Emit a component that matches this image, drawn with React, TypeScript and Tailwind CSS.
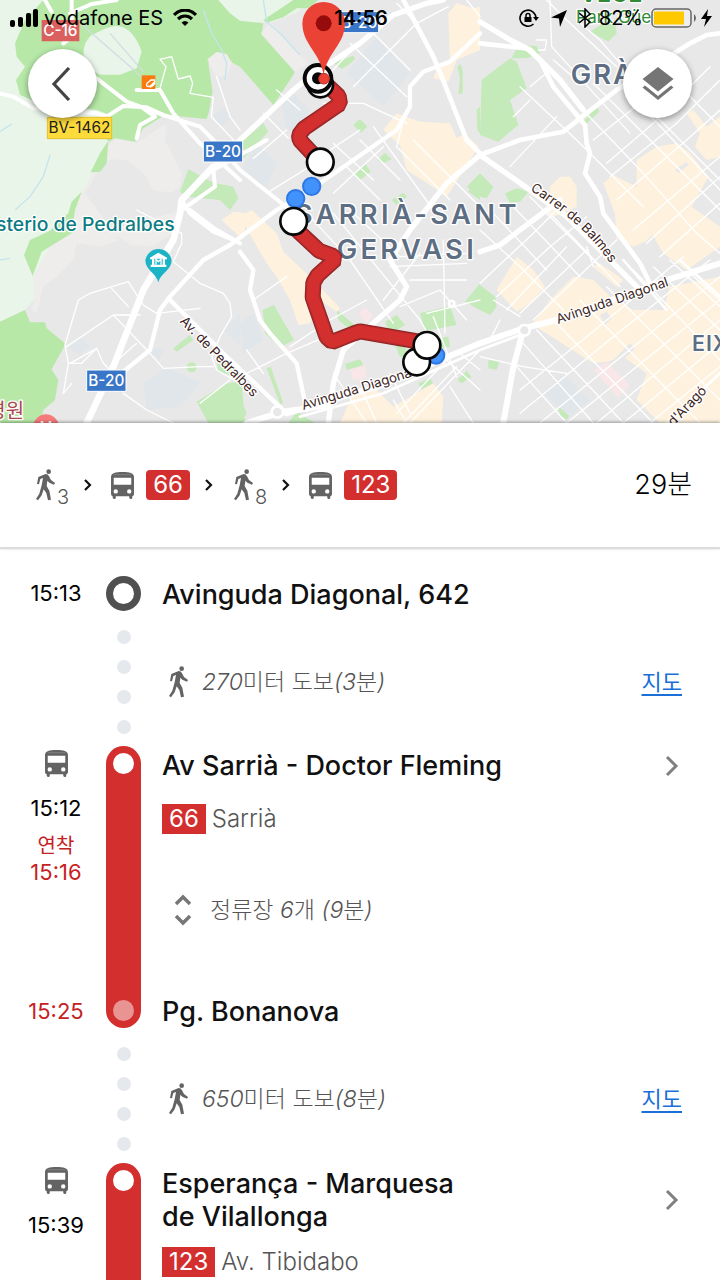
import type { ReactNode } from "react";

const sans = "font-['Inter','Noto_Sans_CJK_KR',sans-serif]";

function Road({ d, w = 7 }: { d: string; w?: number }) {
  return <path d={d} fill="none" stroke="#fff" strokeWidth={w} strokeLinejoin="round" strokeLinecap="round" />;
}

/* The map is drawn in a 3x coordinate space. */
function RouteMap() {
  return (
    <svg viewBox="0 0 2160 1269" preserveAspectRatio="xMidYMid slice" className={`block h-full w-full ${sans}`} role="img" aria-label="Map">
      <rect width="2160" height="1269" fill="#e8e8e8" />
      {/* hills and beige land */}
      <path fill="#eaf5ea" d="M0 0H940L885 40 820 66 720 70 640 100 600 250 330 420 300 470 265 545 215 630 100 830 105 895 75 930 0 965Z" />
      <path fill="#efedeb" d="M345 415 410 428 500 370 495 420 520 470 545 520 540 560 515 578 460 570 430 520 380 480 330 478 290 520 255 580 360 720 300 740 230 730 220 780 170 830 130 860 110 940 95 930 105 895 100 830 215 630 265 545 300 470Z" />
      <path fill="#efedeb" d="M330 690 545 630 530 690 460 740 390 735Z" />
      {/* forest */}
      <path fill="#b7e8a8" d="M130 0 75 60 45 130 50 170 75 200 48 240 60 285 120 310 290 330 330 345 310 395 325 425 345 415 405 425 430 385 495 345 620 357 640 290 625 190 650 160 700 190 720 200 820 315 870 240 885 215 785 105 790 70 720 62 690 40 655 0Z" />
      <path fill="#b7e8a8" d="M800 68 850 52 890 25 925 25 955 0H880L790 60Z" />
      <path fill="#eaf5ea" d="M320 84C375 65 405 100 425 155L410 205 360 224 300 224C245 200 235 140 275 105Z" />
      <path fill="#efedeb" d="M622 178 650 156 680 162 696 188 680 230 655 240 640 215Z" />
      <path fill="#e8e8e8" d="M650 230 680 230 720 290V420L625 355 634 292Z" />
      <path fill="#efedeb" d="M783 98 812 66 925 190 885 216Z" />
      <path fill="#b7e8a8" d="M325 422 320 490 300 515 272 517 300 460ZM245 575 215 605 205 640 150 692 90 720 72 765 98 828 125 755 215 700 225 630Z" />
      <path fill="#b7e8a8" d="M0 965 75 930 90 967 135 967 140 985 197 1032 155 1108 175 1140 165 1200 130 1230 120 1269H0Z" />
      {/* parks */}
      <path fill="#c3eab8" d="M565 508 640 548 700 560 715 595 690 630 660 600 560 590 540 575ZM590 1205 680 1150 725 1145 735 1269H625ZM520 1045 570 1005 580 1020 530 1055ZM560 1102a15 15 0 1 0 30 0a15 15 0 1 0-30 0M650 1080 690 1085 715 1110 690 1125 655 1115Z" />
      <path fill="#c3eab8" d="M1000 190 1030 178 1060 167 1065 178 1045 195 1025 207ZM1372 200 1382 192 1388 215 1388 280 1375 282 1380 235ZM1060 375 1080 357 1102 380 1082 398ZM1062 525 1095 490 1112 515 1080 540ZM1132 480 1155 458 1175 478 1150 490ZM1175 600 1210 578 1220 590 1190 615ZM720 430 790 370 805 395 730 475Z" />
      <path fill="#c3eab8" d="M1445 240 1530 175 1550 185 1580 265 1530 300 1555 375 1495 425 1440 405ZM1535 175 1555 135 1610 138 1620 160 1580 175ZM1810 70 1845 65 1850 100 1825 125 1770 95ZM1750 365 1790 318 1798 335 1755 375ZM1400 560 1440 520 1480 560 1460 595 1440 590ZM1515 580 1550 565 1585 575 1560 605 1530 610ZM1440 855 1485 890 1490 920 1470 945 1440 930ZM1840 675 1880 720 1875 725 1840 685ZM2025 760 2075 810 2070 815 2025 770ZM1465 1080 1498 1085 1490 1110 1465 1105ZM1675 1225 1690 1220 1715 1240 1700 1258 1680 1248Z" />
      <path fill="#c3eab8" d="M788 930 822 915 882 1020 840 1042 795 1000ZM800 1105 812 1100 850 1210 840 1212ZM1010 930 1070 980 1060 995 1015 960ZM1155 965 1190 945 1215 975 1190 990 1230 1075 1200 1070 1170 1000ZM1260 940 1350 918 1370 975 1275 993ZM1395 905 1440 850V930ZM1310 1015 1345 1010 1350 1040 1320 1045ZM1255 1150 1290 1135 1300 1150 1265 1168ZM1372 1140 1400 1112 1415 1130 1385 1150ZM1035 1092 1080 1078 1090 1095 1040 1110ZM865 1269 890 1235 945 1269ZM720 1190 740 1240 720 1269ZM1430 330 1440 320V400L1432 390ZM1405 575 1440 520V600Z" />
      {/* institutions */}
      <path fill="#e1e6ea" d="M840 290 880 280 930 330 900 385 860 390ZM1040 220 1130 110 1230 220 1150 320ZM730 500 770 430 830 490 800 560 750 540ZM720 970 760 940 790 1020 730 1060ZM1630 1180 1690 1120 1770 1200 1710 1250ZM640 345 670 325 700 355 660 380ZM430 1150 500 1100 600 1150 540 1220 440 1230ZM670 990 720 940V1040ZM200 1040 240 1010 270 1040 240 1065ZM460 1040 490 1050 480 1080 450 1060Z" />
      <path fill="#f8e6e8" d="M1075 940 1095 920 1118 945 1100 970ZM1050 1110 1095 1095 1100 1135 1060 1140ZM850 1050 865 1040 878 1060 860 1072ZM1780 1110 1820 1085 1890 1155 1855 1193Z" />
      {/* commercial areas */}
      <path fill="#fef2df" d="M1345 40 1370 10 1420 25 1440 20V150L1370 180 1345 245 1300 235 1310 205 1350 185ZM1150 390 1190 340 1260 365 1350 370 1370 415 1395 400 1435 440 1340 590 1290 555 1220 510 1200 435ZM720 650 755 630 830 700 850 755 940 840 1020 925 1010 935 960 900 930 970 895 975 870 900 830 830 800 790ZM665 660 700 635 740 640 730 720Z" />
      <path fill="#fef2df" d="M2060 340 2080 330 2120 380 2160 350V470L2120 480 2085 440 2100 400ZM1910 480 1970 440 2030 430 2070 460 2125 530 2075 620 2160 680V740L2060 810 1990 760 1960 715 1900 740 1850 715 1845 640 1810 550 1840 525 1910 560ZM1650 560 1680 530 1710 530 1730 560 1730 620 1650 655ZM1490 870 1550 770 1600 810 1635 860 1590 910 1550 935ZM1600 970 1650 900 1720 830 1780 840 1840 900 1900 930 1990 930 2010 860 2060 850 2160 830V1269H1980L1910 1200 1940 1120 1870 1070 1820 1085 1780 1090 1600 975ZM1020 1269 1060 1180 1130 1170 1180 1220 1300 1150 1330 1190 1325 1269ZM1780 800 1800 790 1870 840 1850 860Z" />
      <path fill="#e8e8e8" d="M1940 720 1960 705 1990 765 1960 790ZM1800 945 1820 935 1835 955 1815 975ZM1875 1045 1890 1030 1905 1045 1870 1080 1840 1100 1840 1080ZM2025 510 2060 485 2065 495 2035 520Z" />

      {/* streams and cable line */}
      <path d="M0 395 35 372M150 465 130 530 90 590 45 630M0 780 30 775M610 30 635 100 665 150 680 190 675 240M790 0 800 65 840 100 900 165" fill="none" stroke="#c4e4ee" strokeWidth="4" />
      <path d="M230 60 425 230M330 100 430 215" fill="none" stroke="#d3dce0" strokeWidth="4" />

      {/* minor streets */}
      <Road w={4} d="M480 178 515 170 535 237 570 228 578 250 570 280 640 292 634 350 720 440M480 178 498 200 480 265M650 230 690 350 720 390M410 630 545 700 545 730 520 785 600 850 670 880 690 910 695 950 660 1010 635 1070 650 1110 720 1150M195 1035 235 900 270 880 385 845 410 885 430 915 470 940 600 925M200 1040 340 945 420 945M340 945 450 1060 490 1105 600 1100 640 1100M210 1090 290 1045 310 1090 350 1130M195 1035 205 1090 190 1180 215 1150M205 1090 245 1090 285 1050M330 860 385 920M370 1180 440 1230 520 1269M600 1210 690 1140M410 1030 330 1100" />
      <Road w={4} d="M760 475 860 390M790 340 865 415M830 270 900 330M1050 130 1220 290M1110 90 1230 210M1075 130 970 240M1130 190 1060 260M1130 190 1250 70 1345 20M970 310 1090 310 1220 370M1000 430 1120 540M960 470 1080 390M1040 500 1140 600M1080 420 1200 540M1120 380 1300 630M1150 440 1000 580M800 580 960 480M1210 360 1190 440 1350 600M1240 420 1440 620M1190 10 1240 60M1400 0 1440 50M860 680 1000 820M930 650 1050 780 1180 970M1000 640 1260 960 1340 1100M1050 630 1200 770 1400 760M1170 800 1400 790M1230 840 1400 840M1260 760 1150 900M1330 720 1335 1000M1280 940 1440 900M1200 920 1320 870 1400 960M760 900 860 830M720 1130 860 1060 1000 1000M740 1050 790 1120M870 1040 990 960 1100 900" />
      <Road w={4} d="M1090 1180 1130 1269M1000 1120 1100 1269M1180 1200 1220 1269M1190 1240 1340 1080M1210 1269 1370 1100M1230 1269 1440 1050M1340 1080 1440 1170M1380 1060 1440 1110M1350 1160 1420 1269M1300 950 1370 1130M1170 1120 1230 1240M1640 0 1700 60 1850 200M1650 0 1655 140 1890 400M1610 120 1640 120 1635 150 1615 150M1730 60 1800 120 1860 190M1560 260 1740 430 1930 620M1590 300 1540 350M1530 500 1670 350M1590 260 1650 210M1660 180 1730 240M1720 300 1930 520 2090 700 2160 760M1780 250 2060 530M1850 240 2160 570M1900 370 2160 630M1950 330 2160 540M2060 280 2160 380M1780 420 1920 310 2000 250M1820 490 1960 370 2130 200M1830 530 2030 370 2160 240M1850 600 2060 420 2160 330M1900 690 2160 470M1940 730 2160 530M1980 770 2160 610" />
      <Road w={4} d="M1440 690 1560 800 1690 930M1480 640 1640 810M1540 620 1740 830M1590 590 1800 800M1640 630 1860 860M1440 850 1600 700 1680 620M1490 890 1650 740 1760 650M1520 930 1700 740M1560 940 1760 750M1600 960 1850 720M1760 740 1780 800M1660 960 1960 1269M1610 990 1870 1269M1570 1030 1780 1269M1550 1100 1700 1269M1740 900 2100 1269M1820 860 2160 1200M1900 810 2160 1080M1960 800 2160 990M2010 780 2160 920M2070 820 2160 900M1560 1170 1760 1010 2050 770M1560 1240 1840 1010 2130 780M1620 1269 1900 1040 2160 830M1700 1269 1960 1060 2160 900M1790 1269 2160 960M1870 1269 2160 1030M1950 1269 2160 1100M1480 900 1560 950M1475 1010 1500 960M1440 1070 1570 1100 1700 1120" />

      {/* main roads */}
      <Road w={12} d="M0 280 40 290 100 325 290 340 320 350M320 350 370 318 440 322 490 345M410 415 420 375 465 350 430 325" />
      <Road w={12} d="M290 235 380 305 490 345 600 380 640 420 720 510 870 630M410 270 480 270 520 340 600 430 720 540M135 0 155 35M215 0 215 110 190 130M210 40 275 12 350 0M545 630 645 560 640 510 800 420M570 630 650 690 720 730M545 600 570 640 640 695 700 720" />
      <Road w={20} d="M640 500 545 600 540 640 520 720 430 870 340 1100 260 1269" />
      <Road w={16} d="M640 505 720 420 880 270 930 230 1080 130 1180 45 1280 10 1330 0" />
      <Road w={13} d="M370 1115 450 1050 480 930 510 890 610 780 690 735 830 630 930 570 1060 480 1190 390 1230 320 1230 260 1270 215 1350 185 1440 100M510 900 550 940 680 1070 860 1240M720 755 760 810 750 870 780 960 810 1000 890 1090 920 1230" />
      <Road w={14} d="M1210 0 1300 170 1325 230 1400 420 1440 460M1440 465 1560 420 1690 395 1740 355 1850 270 2070 130 2120 105 2160 100M1440 130 1580 145 1620 180 1660 260 1755 375 1760 430 1770 460 1755 520 1800 590 1810 640 1920 790 1960 870" />
      <Road w={16} d="M1440 65 1530 120 1590 150 1680 240 1750 330M985 1269 1000 1150 1030 1050 1120 970 1200 900 1220 860 1170 780 1230 690 1340 550 1440 465M1440 465 1590 570 1700 650 1840 790 1920 870M1440 755 1500 735 1680 600" />
      <Road w={18} d="M860 1240 1130 1160 1440 1030 1570 985 1670 960 2000 840 2160 790M740 1269 850 1235 990 1215M1570 990 1540 1100 1510 1269" />
      <Road w={8} d="M900 1250 1150 1180 1440 1050 1560 1005M2000 1269 2160 1120M1870 780 2000 930M2040 780 2160 890" />
      <g fill="#e8e8e8" stroke="#fff" strokeWidth="8">
        <circle cx="1573" cy="991" r="16" /><circle cx="832" cy="1236" r="17" /><circle cx="1355" cy="911" r="8" />
      </g>

      {/* road shields */}
      <g fontSize="46" fontWeight="500" textAnchor="middle">
        <path fill="#d9605f" d="M125 60H238V124H125Z" /><text x="181" y="108" fill="#fff">C-16</text>
        <path fill="#fddb3a" stroke="#e5bf2d" strokeWidth="3" d="M142 352H335V416H142Z" /><text x="238" y="400" fill="#222" fontWeight="400">BV-1462</text>
        <g fill="#3a76c8" stroke="#fff" strokeWidth="3"><path d="M610 423H728V486H610ZM260 1110H378V1174H260ZM1020 35H1136V98H1020Z" /></g>
        <g fill="#fff"><text x="669" y="471">B-20</text><text x="319" y="1159">B-20</text><text x="1078" y="84">B-20</text></g>
      </g>
      <path fill="#fa7a10" d="M425 226H466V267H425Z" />
      <path d="M465 240H453L441 250C436 262 448 262 455 254L466 243M449 261C461 260 462 252 466 249" fill="none" stroke="#fff" strokeWidth="4" />

      {/* street and area names */}
      <g paintOrder="stroke" stroke="#fff" strokeWidth="8" strokeLinejoin="round">
        <g fill="#3d2522" fontSize="40">
          <path id="balmes" d="M1590 570C1680 630 1765 690 1830 790" fill="none" stroke="none" />
          <text><textPath href="#balmes">Carrer de Balmes</textPath></text>
          <text transform="translate(1674 972) rotate(-19)">Avinguda Diagonal</text>
          <text transform="translate(910 1230) rotate(-17)">Avinguda Diagonal</text>
          <text transform="translate(538 965) rotate(46)">Av. de Pedralbes</text>
          <text transform="translate(2020 1280) rotate(-46)">d'Aragó</text>
        </g>
        <text x="-12" y="694" fontSize="58" fontWeight="500" fill="#0d7c83">sterio de Pedralbes</text>
        <text x="-38" y="1255" fontSize="60" fill="#a9464e">병원</text>
        <g fill="#5d6e83" fontSize="82" fontWeight="600" letterSpacing="10">
          <text x="884" y="671">SARRIÀ-SANT</text><text x="1010" y="777">GERVASI</text><text x="1712" y="252" letterSpacing="6">GRÀCIA</text>
          <text x="2076" y="1053" fontSize="64" letterSpacing="3">EIXAMPLE</text>
        </g>
        <g fill="#318a35"><text x="1728" y="68" fontSize="52">Park Güell</text><text x="1740" y="5" fontSize="70" fontWeight="600">VECE</text></g>
      </g>

      {/* museum and hospital pins */}
      <path fill="#1bb4c7" d="M475 847C468 819 436 810 436 781A40 40 0 0 1 515 781C515 810 482 819 475 847Z" />
      <path fill="#fff" fillRule="evenodd" d="M475 758 450 773V778H456V794H452V801H499V794H495V778H501V773ZM463 776H488V794H463Z" />
      <path d="M468 794V777L475 785 483 777V794" fill="none" stroke="#fff" strokeWidth="4" />
      <circle cx="138" cy="1282" r="39" fill="#f57b7c" /><path d="M126 1263V1280M150 1263V1280" stroke="#fff" strokeWidth="8" />

      {/* itinerary */}
      <g fill="#4292fb" stroke="#2d78e5" strokeWidth="6">
        <circle cx="960" cy="500" r="22" /><circle cx="935" cy="559" r="26" /><circle cx="887" cy="596" r="26" /><circle cx="1308" cy="1066" r="25" />
      </g>
      <g fill="none" strokeLinejoin="bevel">
        <path d="M965 240 1016 288 1020 312 1010 318 912 385 897 405 899 420 955 480M880 680 957 752 1000 768 1006 778 952 827 940 848 938 892 980 1012 996 1026 1060 1001 1080 994 1270 1027" stroke="#8f2424" strokeWidth="48" />
        <path d="M965 240 1016 288 1020 312 1010 318 912 385 897 405 899 420 955 480M880 680 957 752 1000 768 1006 778 952 827 940 848 938 892 980 1012 996 1026 1060 1001 1080 994 1270 1027" stroke="#b52b2b" strokeWidth="42" />
        <path d="M965 240 1016 288 1020 312 1010 318 912 385 897 405 899 420 955 480M880 680 957 752 1000 768 1006 778 952 827 940 848 938 892 980 1012 996 1026 1060 1001 1080 994 1270 1027" stroke="#d32f2f" strokeWidth="35" />
      </g>
      <g fill="#fff" stroke="#080808" strokeWidth="8">
        <circle cx="961" cy="254" r="38" /><circle cx="954" cy="235" r="40" strokeWidth="12" />
        <circle cx="961" cy="486" r="40" /><circle cx="881" cy="664" r="40" /><circle cx="1250" cy="1086" r="40" /><circle cx="1281" cy="1036" r="40" />
      </g>
      <circle cx="954" cy="235" r="18" fill="#080808" />
      <path fill="#ea4335" d="M971 225C962 160 907 133 907 70A64 64 0 0 1 1035 70C1035 133 980 160 971 225Z" />
      <circle cx="971" cy="70" r="24" fill="#960b0b" /><circle cx="972" cy="236" r="16" fill="#ea4335" stroke="#bd3028" strokeWidth="3" />
    </svg>
  );
}

function StatusBar() {
  return (
    <div className="absolute inset-x-0 top-0 grid h-9 grid-cols-[1fr_auto_1fr] items-center pr-2 pl-2.5 text-xl text-black">
      <div className="flex items-center gap-1.5">
        <svg viewBox="0 0 28 18" className="h-[18px] w-7"><rect y="11" width="5" height="7" rx="2" /><rect x="8" y="8" width="5" height="10" rx="2" /><rect x="16" y="4" width="5" height="14" rx="2" /><rect x="23" width="5" height="18" rx="2" /></svg>
        <span>vodafone ES</span>
        <svg viewBox="0 0 24 18" className="ml-1 h-[18px] w-6"><path d="M1 6C7-.5 17-.5 23 6M5 10C9 6 15 6 19 10" fill="none" stroke="#000" strokeWidth="3.2" /><path d="M8.5 13.5Q12 10.5 15.5 13.5L12 17Z" /></svg>
      </div>
      <span className="font-semibold">14:56</span>
      <div className="flex items-center justify-end gap-2">
        <svg viewBox="0 0 20 18" className="h-[18px] w-5"><path d="M14.5 15A8 8 0 1 1 17 9" fill="none" stroke="#000" strokeWidth="1.6" /><path d="M14 8H20L17 12ZM5.5 8H12.5V13H5.5Z" /><path d="M7 8V6.5A2 2 0 0 1 11 6.5V8" fill="none" stroke="#000" strokeWidth="1.5" /></svg>
        <svg viewBox="0 0 16 17" className="ml-1 h-[17px] w-4"><path d="M16 0 9 17 8 8.5 0 7.5Z" /></svg>
        <svg viewBox="0 0 12 20" className="ml-1 h-5 w-3"><path d="M0 5 11 14 6 19V1L11 6 0 15" fill="none" stroke="#000" strokeWidth="1.5" /></svg>
        <span>82%</span>
        <svg viewBox="0 0 46 20" className="h-5 w-[46px]"><rect x="1" y="1" width="39" height="18" rx="4" fill="#eee" stroke="#666" strokeWidth="1.5" /><rect x="3" y="3.5" width="30" height="13" fill="#ffc900" /><path d="M43 6Q47 10 43 14Z" fill="#666" /></svg>
        <svg viewBox="0 0 11 18" className="-ml-1 h-[18px] w-[11px]"><path d="M7 0 0 10H5L3 18 11 7H6Z" /></svg>
      </div>
    </div>
  );
}

const roundButton = "grid size-[69px] place-items-center rounded-full bg-white shadow-[0_2px_6px_rgba(0,0,0,0.4)]";

function WalkIcon() {
  return (
    <svg viewBox="0 0 57 96" className="h-8 w-[19px] shrink-0" fill="#636363" aria-hidden="true">
      <circle cx="38" cy="8" r="7" />
      <path d="M3 45 7 24 29 15Q36 15 39 22L45 33 57 42 54 47 40 41 34 35 32 51 40 65 45 92 36 94 31 72 23 61 17 79 6 94 0 90 10 74 17 49 21 27 13 30 9 46Z" />
    </svg>
  );
}

function BusIcon() {
  return (
    <svg viewBox="0 0 68 80" className="h-[27px] w-[23px] shrink-0" fill="#636363" aria-hidden="true">
      <path fillRule="evenodd" d="M0 15C0 3 13 0 34 0S68 3 68 15V66Q68 71 63 72V76Q63 80 59 80T54 76V72H14V76Q14 80 10 80T5 76V72Q0 71 0 66ZM8 17V38H60V17ZM14 51A6.500 6.500 0 1 0 14 64A6.500 6.500 0 1 0 14 51ZM54 51A6.500 6.500 0 1 0 54 64A6.500 6.500 0 1 0 54 51Z" />
      <path d="M8 8H60" stroke="#8d8d8d" strokeWidth="2" />
    </svg>
  );
}

function Chevron() {
  return <svg viewBox="0 0 14 22" className="mr-[3px] h-[22px] w-3.5" aria-hidden="true"><path d="M2 2 11 11 2 20" fill="none" stroke="#808080" strokeWidth="3" /></svg>;
}

function Sep() {
  return <svg viewBox="0 0 8 12" className="h-3 w-2" aria-hidden="true"><path d="M1 1 6 6 1 11" fill="none" stroke="#111" strokeWidth="2.2" /></svg>;
}

function SummaryWalk({ minutes }: { minutes: string }) {
  return (
    <span className="flex items-center gap-0.5 pl-1.5">
      <WalkIcon />
      <span className="pt-6 text-xl leading-6 font-light text-[#555]">{minutes}</span>
    </span>
  );
}

function SummaryBus({ line }: { line: string }) {
  return (
    <span className="flex items-center gap-3 pl-1">
      <BusIcon />
      <span className="rounded bg-[#d32f2f] px-[7px] text-2xl leading-[30px] text-white">{line}</span>
    </span>
  );
}

function Row({ time, rail, children }: { time?: ReactNode; rail: ReactNode; children: ReactNode }) {
  return (
    <li className="grid grid-cols-[106px_35px_1fr]">
      <div className="pl-1.5 text-center text-[22px] leading-[26px]">{time}</div>
      {rail}
      <div className="pr-[38px] pl-[21px]">{children}</div>
    </li>
  );
}

function WalkRow({ distance, minutes }: { distance: string; minutes: string }) {
  return (
    <Row
      rail={
        <div className="flex h-[135px] flex-col items-center justify-between pt-[19px] pb-3">
          {[0, 1, 2, 3].map((i) => <span key={i} className="size-3.5 rounded-full bg-[#e5e9ee]" />)}
        </div>
      }
    >
      <div className="flex items-center pt-[54px] pl-[7px] text-[23px] leading-[34px] font-light text-[#555]">
        <WalkIcon />
        <span className="ml-3.5"><i>{distance}</i>미터 도보<i>({minutes}</i>분<i>)</i></span>
        <a href="#map" className="ml-auto text-[22px] font-normal text-[#1a6fd8] underline underline-offset-4">지도</a>
      </div>
    </Row>
  );
}

function Line({ number, name }: { number: string; name: string }) {
  return (
    <div className="flex items-center gap-1.5 text-2xl leading-[30px] font-light text-[#555]">
      <span className="bg-[#d32f2f] px-[7px] font-normal text-white">{number}</span>{name}
    </div>
  );
}

const title = "text-[27px] leading-[33px] font-medium text-[#111]";

export default function App() {
  return (
    <main className={`h-screen overflow-hidden bg-white text-black ${sans}`}>
      <header className="relative h-[423px]">
        <RouteMap />
        <StatusBar />
        <div className="absolute inset-x-7 top-[49px] flex justify-between">
          <button className={roundButton} aria-label="Back">
            <svg viewBox="0 0 20 34" className="mr-1 h-[34px] w-5"><path d="M18 1 3 17 18 33" fill="none" stroke="#444" strokeWidth="3.2" /></svg>
          </button>
          <button className={roundButton} aria-label="Layers">
            <svg viewBox="0 0 32 34" className="h-[34px] w-8" fill="#757575"><path d="M16 0 31.5 12 16 24.500.5 12ZM16 29 29 18.5 31.5 20.5 16 33 .5 20.5 3 18.5Z" /></svg>
          </button>
        </div>
      </header>
      <section className="relative flex h-[126px] items-center justify-between border-b-2 border-[#dcdcdc] bg-white pr-7 pl-[30px] shadow-[0_-1px_3px_rgba(0,0,0,0.35)]">
        <div className="flex items-center gap-[15px]">
          <SummaryWalk minutes="3" /><Sep /><SummaryBus line="66" /><Sep /><SummaryWalk minutes="8" /><Sep /><SummaryBus line="123" />
        </div>
        <span className="text-[27px] font-light">29분</span>
      </section>
      <ol className="pt-[27px]">
        <Row time={<div className="leading-[35px]">15:13</div>} rail={<div className="size-[35px] rounded-full border-[7px] border-[#505050]" />}>
          <h2 className={`${title} pt-0.5`}>Avinguda Diagonal, 642</h2>
        </Row>
        <WalkRow distance="270" minutes="3" />
        <Row
          time={
            <div className="flex h-full flex-col items-center pt-1">
              <BusIcon />
              <span className="mt-[18px]">15:12</span>
              <span className="mt-3 text-xl leading-[26px] text-[#c5221f]">연착</span>
              <span className="text-[#c5221f]">15:16</span>
              <span className="mt-auto mb-1 text-[#c5221f]">15:25</span>
            </div>
          }
          rail={
            <div className="flex h-[282px] flex-col items-center justify-between rounded-full bg-[#d32f2f] py-[7px]">
              <span className="size-[21px] rounded-full bg-white" /><span className="size-[21px] rounded-full bg-[#e99393]" />
            </div>
          }
        >
          <div className="flex h-full flex-col">
            <div className="mt-[3px] mb-[22px] flex items-center justify-between"><h2 className={title}>Av Sarrià - Doctor Fleming</h2><Chevron /></div>
            <Line number="66" name="Sarrià" />
            <button className="mt-[60px] flex items-center text-left text-[23px] leading-8 font-light text-[#555]">
              <svg viewBox="0 0 18 32" className="mr-[18px] ml-3 h-8 w-[18px]"><path d="M2 10 9 3 16 10M2 22 9 29 16 22" fill="none" stroke="#777" strokeWidth="3.5" /></svg>
              <span>정류장 <i>6</i>개 <i>(9</i>분<i>)</i></span>
            </button>
            <h2 className={`${title} mt-auto`}>Pg. Bonanova</h2>
          </div>
        </Row>
        <WalkRow distance="650" minutes="8" />
        <Row
          time={
            <div className="flex flex-col items-center pt-1">
              <BusIcon />
              <span className="mt-[18px]">15:39</span>
            </div>
          }
          rail={<div className="flex h-[282px] flex-col items-center rounded-full bg-[#d32f2f] pt-[7px]"><span className="size-[21px] rounded-full bg-white" /></div>}
        >
          <div className="mt-1 mb-3.5 flex items-center justify-between"><h2 className={`${title} max-w-80`}>Esperança - Marquesa de Vilallonga</h2><Chevron /></div>
          <Line number="123" name="Av. Tibidabo" />
        </Row>
      </ol>
    </main>
  );
}
